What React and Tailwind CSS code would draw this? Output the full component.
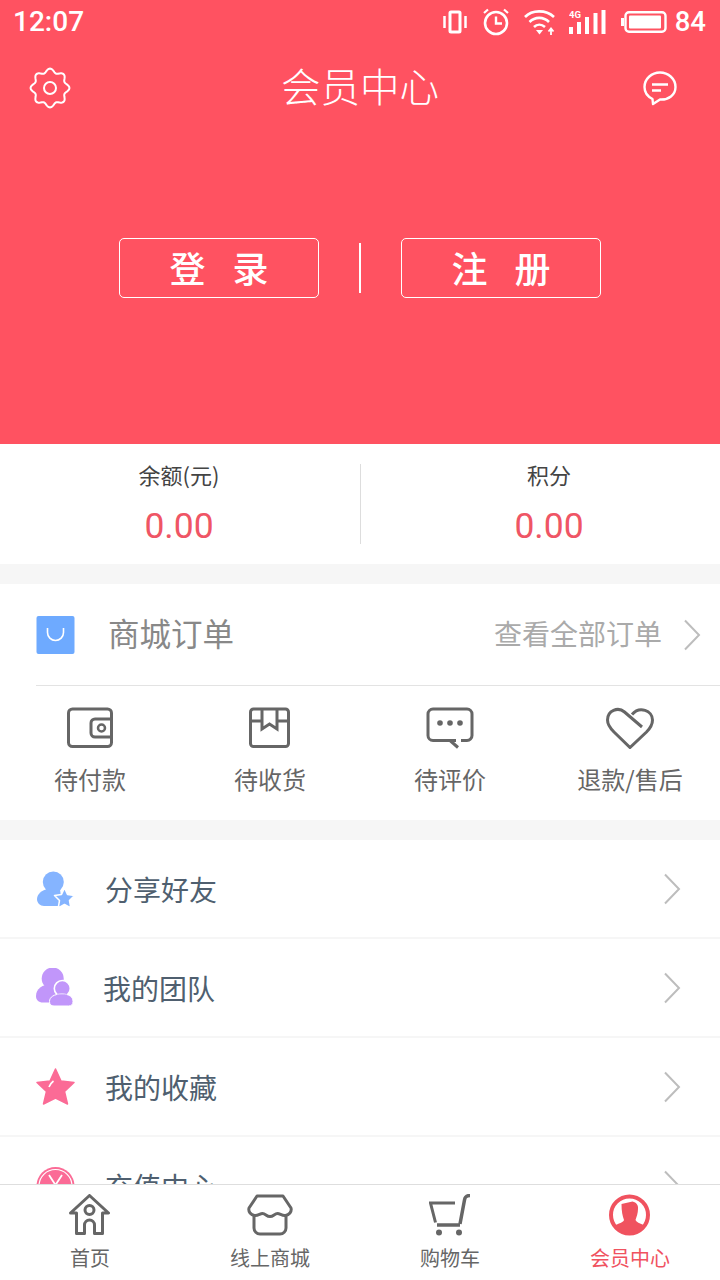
const CJK = { fontFamily: '"Noto Sans CJK SC", "Noto Sans", sans-serif' };

function gearPath(cx, cy, rBase, amp, teeth) {
  const pts = [];
  for (let i = 0; i <= 180; i++) {
    const t = (i / 180) * Math.PI * 2;
    const r = rBase + amp * Math.cos(teeth * t);
    pts.push(`${(cx + r * Math.cos(t - Math.PI / 2)).toFixed(2)} ${(cy + r * Math.sin(t - Math.PI / 2)).toFixed(2)}`);
  }
  return "M" + pts.join("L") + "Z";
}

function Chevron({ className }) {
  return (
    <svg className={className} width="18" height="32" viewBox="0 0 18 32" fill="none">
      <path d="M2 1.5 L16 16 L2 30.5" stroke="#bdbdbd" strokeWidth="2" />
    </svg>
  );
}

function StatusIcons() {
  return (
    <div className="flex items-center">
      <svg width="24" height="24" viewBox="0 0 24 24" fill="none" className="mr-[15px]">
        <rect x="7" y="2" width="10" height="20" rx="1" stroke="#fff" strokeWidth="3" />
        <path d="M1.5 6V18M22.5 6V18" stroke="#fff" strokeWidth="2.5" />
      </svg>
      <svg width="28" height="28" viewBox="0 0 28 28" fill="none" className="mr-[14px]">
        <circle cx="14" cy="15" r="11" stroke="#fff" strokeWidth="2.6" />
        <path d="M14 8.5V15.5H20" stroke="#fff" strokeWidth="2.4" />
        <path d="M2 5L6 1.5M26 5L22 1.5" stroke="#fff" strokeWidth="2.2" />
      </svg>
      <svg width="32" height="27" viewBox="0 0 32 27" fill="none" className="mr-[13px]">
        <path d="M1 8C8 0.5 22 0.5 30 8" stroke="#fff" strokeWidth="2.6" />
        <path d="M5.5 13C11 7.5 19.5 7.5 25 13" stroke="#fff" strokeWidth="2.6" />
        <path d="M10 18C13 15 17.5 15 21 18" stroke="#fff" strokeWidth="2.6" />
        <path d="M12 21H19L15.5 25.5Z" fill="#fff" />
        <path d="M27 26V20M24.5 22.5L27 19.5L29.5 22.5" stroke="#fff" strokeWidth="1.8" />
      </svg>
      <svg width="37" height="26" viewBox="0 0 37 26" fill="none" className="mr-[15px]">
        <text x="0" y="9" fill="#fff" fontSize="9.5" fontWeight="700" fontFamily="Roboto, sans-serif">4G</text>
        <rect x="0" y="18" width="4" height="7" fill="#fff" />
        <rect x="8" y="13" width="4" height="12" fill="#fff" />
        <rect x="16" y="8" width="4" height="17" fill="#fff" />
        <rect x="24.5" y="4" width="4" height="21" fill="#fff" />
        <rect x="32.5" y="1" width="4" height="24" fill="#fff" />
      </svg>
      <svg width="46" height="22" viewBox="0 0 46 22" fill="none" className="mr-[8px]">
        <rect x="4.5" y="1.2" width="40" height="19.6" rx="3.5" stroke="#fff" strokeWidth="2.4" />
        <rect x="8" y="4.5" width="32" height="13" rx="1" fill="#fff" />
        <path d="M0 7H3V15H0Z" fill="#fff" />
      </svg>
      <span className="text-[27.5px] font-medium leading-none text-white" style={{ fontFamily: "Roboto, sans-serif" }}>84</span>
    </div>
  );
}

function Header() {
  return (
    <div className="h-[444px] shrink-0 bg-[#ff5261] flex flex-col" style={CJK}>
      <div className="h-[44px] flex items-center justify-between pl-[13px] pr-[14px]">
        <span className="text-[28px] font-medium leading-none text-white" style={{ fontFamily: "Roboto, sans-serif" }}>12:07</span>
        <StatusIcons />
      </div>
      <div className="h-[88px] flex items-center justify-between">
        <div className="w-[120px] pl-[29px] flex items-center">
          <svg width="42" height="42" viewBox="0 0 42 42" fill="none">
            <path d={gearPath(21, 21, 17.5, 1.9, 8)} stroke="#fff" strokeWidth="2" />
            <circle cx="21" cy="21" r="6" stroke="#fff" strokeWidth="2" />
          </svg>
        </div>
        <span className="mb-[6px] text-[39.5px] font-light leading-none text-white">会员中心</span>
        <div className="w-[120px] pr-[43px] flex items-center justify-end">
          <svg width="34" height="35" viewBox="0 0 34 35" fill="none">
            <path d="M10 33 L9.5 28 C4.5 25.5 1.5 21 1.5 16 C1.5 8 8.5 1.5 17 1.5 C25.5 1.5 32.5 8 32.5 16 C32.5 24 25.5 29 17 28.5 Z" stroke="#fff" strokeWidth="2.4" strokeLinejoin="round" />
            <path d="M9 13.5H25M9 19.5H18" stroke="#fff" strokeWidth="2.4" />
          </svg>
        </div>
      </div>
      <div className="flex items-center justify-center mt-[106px]">
        <div className="w-[200px] h-[60px] pb-[3px] border border-white rounded-[5px] flex items-center justify-center text-[36px] font-medium text-white leading-none [word-spacing:19px]">登 录</div>
        <div className="w-[2px] h-[50px] bg-white mx-[40px]" />
        <div className="w-[200px] h-[60px] pb-[3px] border border-white rounded-[5px] flex items-center justify-center text-[36px] font-medium text-white leading-none [word-spacing:19px]">注 册</div>
      </div>
    </div>
  );
}

function Stats() {
  return (
    <div className="h-[120px] shrink-0 bg-white flex items-center" style={CJK}>
      <div className="w-[360px] h-[80px] pr-[2px] flex flex-col items-center">
        <span className="-mt-[2px] text-[22px] leading-[24px] text-[#444444]">余额(元)</span>
        <span className="mt-[20px] text-[35.5px] leading-[40px] text-[#ef5565]" style={{ fontFamily: "Roboto, sans-serif" }}>0.00</span>
      </div>
      <div className="w-[360px] h-[80px] pl-[17px] flex flex-col items-center border-l border-[#dddddd]">
        <span className="-mt-[2px] text-[22px] leading-[24px] text-[#444444]">积分</span>
        <span className="mt-[20px] text-[35.5px] leading-[40px] text-[#ef5565]" style={{ fontFamily: "Roboto, sans-serif" }}>0.00</span>
      </div>
    </div>
  );
}

const IC = { stroke: "#666666", strokeWidth: 3, fill: "none" };

const orderItems = [
  {
    label: "待付款",
    icon: (
      <svg width="46" height="42" viewBox="0 0 46 42" fill="none">
        <rect x="1.5" y="2" width="43" height="37.5" rx="4" {...IC} />
        <path d="M44.5 12H28a4 4 0 0 0-4 4V26a4 4 0 0 0 4 4H44.5" {...IC} />
        <circle cx="34.5" cy="21" r="3.5" stroke="#666666" strokeWidth="2.5" />
      </svg>
    ),
  },
  {
    label: "待收货",
    icon: (
      <svg width="42" height="42" viewBox="0 0 42 42" fill="none">
        <rect x="1.5" y="2" width="38" height="37.5" rx="3" {...IC} />
        <path d="M1.5 14H13M28 14H39.5" {...IC} />
        <path d="M13 2V22L20.5 17L28 22V2" {...IC} />
      </svg>
    ),
  },
  {
    label: "待评价",
    icon: (
      <svg width="50" height="42" viewBox="0 0 50 42" fill="none">
        <path d="M31 33.5H8a5 5 0 0 1-5-5V7a5 5 0 0 1 5-5H42a5 5 0 0 1 5 5V28.5a5 5 0 0 1-5 5H36" {...IC} />
        <path d="M25 33.5L33 40.5" {...IC} />
        <circle cx="15" cy="16" r="2.8" fill="#666666" />
        <circle cx="25" cy="16" r="2.8" fill="#666666" />
        <circle cx="35" cy="16" r="2.8" fill="#666666" />
      </svg>
    ),
  },
  {
    label: "退款/售后",
    icon: (
      <svg width="48" height="42" viewBox="0 0 48 42" fill="none">
        <path d="M36 20L18.5 5C12 -0.5 1.5 3.5 1.5 13C1.5 18 4 21 8 25L24 40.5L40.5 25C44 21.5 46.5 18 46.5 13C46.5 3.5 33.5 -1.5 26 7.5" {...IC} />
      </svg>
    ),
  },
];

function Orders() {
  return (
    <div className="mt-[20px] h-[236px] shrink-0 bg-white flex flex-col" style={CJK}>
      <div className="ml-[36px] h-[102px] shrink-0 border-b border-[#e3e3e3] flex items-center pr-[19px]">
        <svg width="40" height="40" viewBox="0 0 40 40" fill="none" className="shrink-0">
          <rect x="0.5" y="1" width="38" height="38" rx="2" fill="#6eaaff" />
          <path d="M11.5 13V17.5A8 8 0 0 0 27.5 17.5V13" stroke="#fff" strokeWidth="1.6" />
        </svg>
        <span className="ml-[32px] mb-[3px] text-[31.5px] leading-none text-[#888888]">商城订单</span>
        <span className="ml-auto mb-[3px] text-[28px] leading-none text-[#aaaaaa]">查看全部订单</span>
        <Chevron className="ml-[21px]" />
      </div>
      <div className="grid grid-cols-4 flex-1">
        {orderItems.map((it) => (
          <div key={it.label} className="flex flex-col items-center pt-[21px]">
            <div className="h-[42px] flex items-center">{it.icon}</div>
            <span className="mt-[14px] text-[24px] leading-[32px] text-[#666666]">{it.label}</span>
          </div>
        ))}
      </div>
    </div>
  );
}

const listItems = [
  {
    label: "分享好友",
    tx: "ml-[30px]",
    icon: (
      <svg width="40" height="40" viewBox="0 0 40 40" fill="none">
        <circle cx="18.3" cy="13" r="10.5" fill="#85b4ff" />
        <path d="M2 30C2 25 7 21 13 20H25L27 37H9C5 37 2 34 2 30Z" fill="#85b4ff" />
        <path d="M29.5 19L32.5 25.5L39.5 26.5L34.5 31.5L35.8 39L29.5 35.5L23.2 39L24.5 31.5L19.5 26.5L26.5 25.5Z" fill="#85b4ff" stroke="#fff" strokeWidth="1.5" strokeLinejoin="round" />
      </svg>
    ),
  },
  {
    label: "我的团队",
    tx: "ml-[28px]",
    icon: (
      <svg width="40" height="40" viewBox="0 0 40 40" fill="none">
        <circle cx="17.7" cy="10.5" r="11" fill="#c196fa" />
        <path d="M1 28C1 21 7 16 17 16C27 16 30 23 26 34.5H8C3.5 34.5 1 32 1 28Z" fill="#c196fa" />
        <circle cx="27.3" cy="20.5" r="8" fill="#c196fa" stroke="#fff" strokeWidth="1.6" />
        <path d="M14.5 33.5C14.5 29 19 26 27 26C34.5 26 38 29 38 33.5C38 36.5 36.5 38 33.5 38H19C16 38 14.5 36.5 14.5 33.5Z" fill="#c196fa" stroke="#fff" strokeWidth="1" />
        <path d="M22 28L32 28" stroke="#c196fa" strokeWidth="3" />
      </svg>
    ),
  },
  {
    label: "我的收藏",
    tx: "ml-[30px]",
    icon: (
      <svg width="40" height="40" viewBox="0 0 40 40" fill="none">
        <path d="M20.5 2L26 14L39 15.5L29.5 24.5L32.5 37L20.5 31L8.5 37L11.5 24.5L2 15.5L15 14Z" fill="#fb6b96" stroke="#fb6b96" strokeWidth="1.5" strokeLinejoin="round" />
        <path d="M14 20C15 17.5 16.5 15.5 18.5 14" stroke="#fff" strokeWidth="1.6" />
      </svg>
    ),
  },
  {
    label: "充值中心",
    tx: "ml-[30px]",
    icon: (
      <svg width="40" height="40" viewBox="0 0 40 40" fill="none">
        <circle cx="20.5" cy="20" r="19" fill="#fb6b96" />
        <circle cx="20.5" cy="20" r="16.5" stroke="#fff" strokeWidth="1.2" />
        <path d="M14 9L20.5 19L27 9M20.5 19V30M14 20H27" stroke="#fff" strokeWidth="1.8" />
      </svg>
    ),
  },
];

function List() {
  return (
    <div className="mt-[20px] bg-white" style={CJK}>
      {listItems.map((it) => (
        <div key={it.label} className="h-[99px] flex items-center pl-[35px] pr-[39px] border-b-2 border-[#f6f6f6]">
          <div className="w-[40px] h-[40px] shrink-0 flex items-center justify-center">{it.icon}</div>
          <span className={`${it.tx} text-[28px] leading-none text-[#4f5f6f]`}>{it.label}</span>
          <Chevron className="ml-auto" />
        </div>
      ))}
    </div>
  );
}

const navItems = [
  {
    label: "首页",
    icon: (
      <svg width="42" height="42" viewBox="0.5 0 42 42" fill="none">
        <path d="M8 19H2L21 1.5L40 19H34V39.5H26V31A5 5 0 0 0 16 31V39.5H8Z" {...IC} strokeLinejoin="round" />
        <circle cx="21" cy="16" r="4.5" {...IC} />
      </svg>
    ),
  },
  {
    label: "线上商城",
    icon: (
      <svg width="46" height="42" viewBox="0 0 46 42" fill="none">
        <path d="M10 2H36L44 14C45 18 42 21 38.5 21.5C35 22 33 19.5 30.5 19.5C27.5 19.5 26.5 22.5 23 22.5C19.5 22.5 18.5 19.5 15.5 19.5C13 19.5 11 22 7.5 21.5C4 21 1 18 2 14Z" {...IC} strokeLinejoin="round" />
        <path d="M7 22V34A6 6 0 0 0 13 40H33A6 6 0 0 0 39 34V22" {...IC} />
      </svg>
    ),
  },
  {
    label: "购物车",
    icon: (
      <svg width="42" height="42" viewBox="0 0 42 42" fill="none">
        <path d="M26 9H1.5L6.5 28.5" {...IC} />
        <path d="M41 1.5C37 1.5 36 3 35.5 6L31 30" stroke="#666666" strokeWidth="3.5" />
        <path d="M8 31H31" stroke="#666666" strokeWidth="3.5" />
        <circle cx="10" cy="38.5" r="3" fill="#666666" />
        <circle cx="30" cy="38.5" r="3" fill="#666666" />
      </svg>
    ),
  },
  {
    label: "会员中心",
    active: true,
    icon: (
      <svg width="42" height="42" viewBox="0.5 0 42 42" fill="none">
        <circle cx="21" cy="21" r="18.5" stroke="#f0525f" strokeWidth="4" />
        <path d="M13 10L24 7.5C28 8.5 30 11 29.5 15C29.5 19 28 23 27 26C28 28 31 29.5 35 31L36 33C33 37 28 39 21 39C14 39 9 37 6 33L7 31C11 29.5 15 28 15.5 26C14 22 13 17 13 10Z" fill="#f0525f" />
      </svg>
    ),
  },
];

function Nav() {
  return (
    <div className="h-[96px] shrink-0 bg-white border-t border-[#dedede] grid grid-cols-4" style={CJK}>
      {navItems.map((it) => (
        <div key={it.label} className="flex flex-col items-center pt-[9px]">
          <div className="h-[42px] flex items-center">{it.icon}</div>
          <span className={`mt-[8px] text-[20px] leading-[28px] ${it.active ? "text-[#f0525f]" : "text-[#666666]"}`}>{it.label}</span>
        </div>
      ))}
    </div>
  );
}

export default function App() {
  return (
    <div className="w-[720px] h-[1280px] bg-[#f6f6f6] flex flex-col overflow-hidden">
      <div className="flex-1 min-h-0 overflow-hidden flex flex-col">
        <Header />
        <Stats />
        <Orders />
        <List />
      </div>
      <Nav />
    </div>
  );
}
